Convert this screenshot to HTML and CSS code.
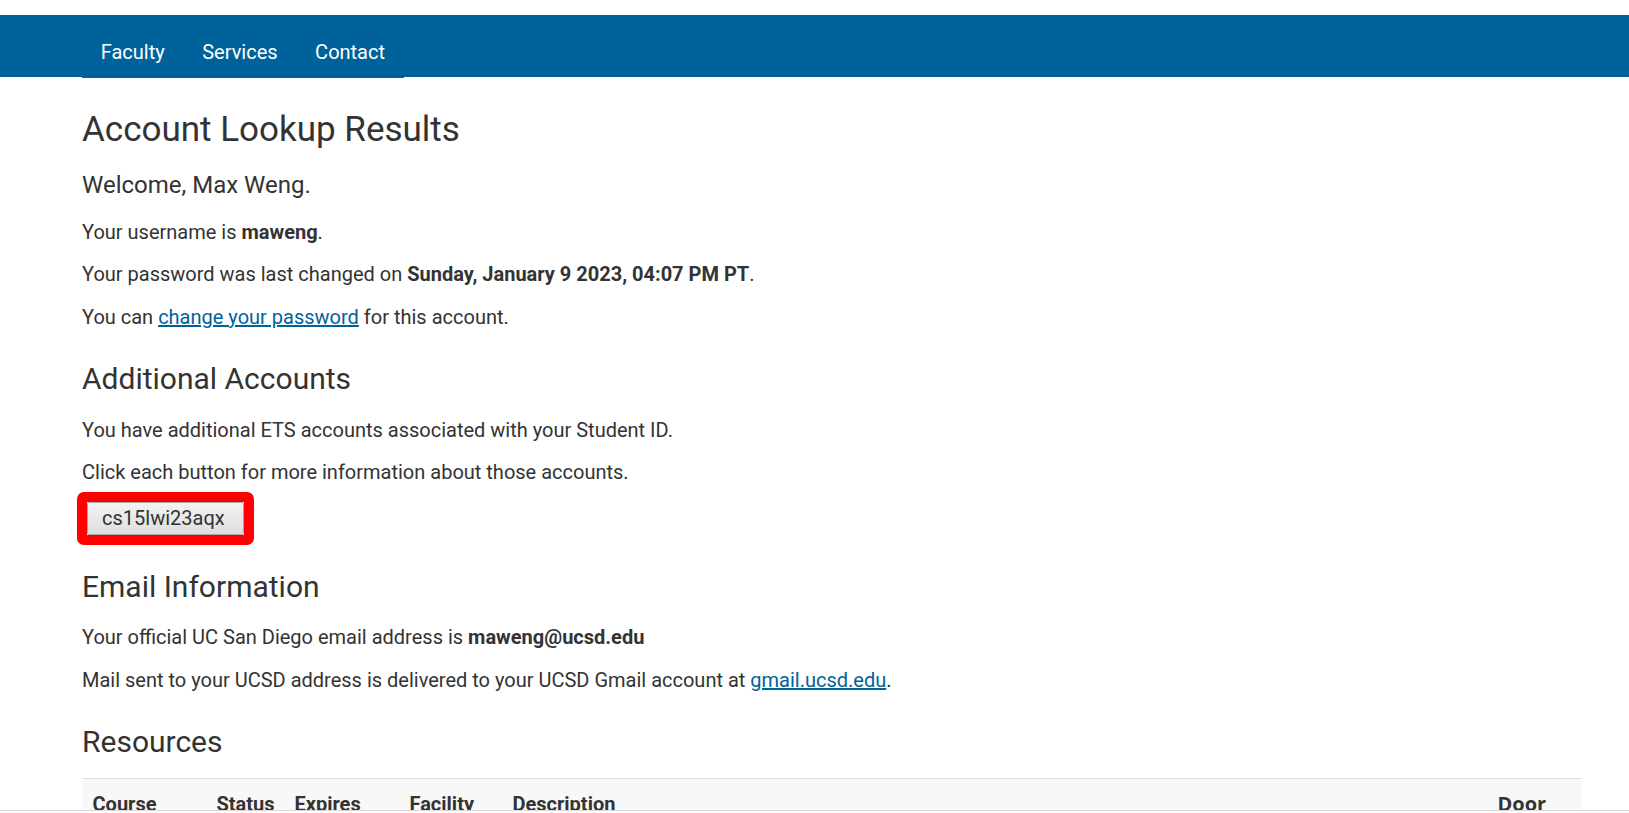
FILE: index.html
```html
<!DOCTYPE html>
<html lang="en">
<head>
<meta charset="utf-8">
<title>Account Lookup Results</title>
<link rel="stylesheet" href="styles.css">
</head>
<body>
<header class="topbar">
  <ul class="nav">
    <li><a href="#">Faculty</a></li>
    <li><a href="#">Services</a></li>
    <li><a href="#">Contact</a></li>
  </ul>
</header>
<main class="container">
  <h1 class="title">Account Lookup Results</h1>
  <h4 class="welcome">Welcome, Max Weng.</h4>
  <p>Your username is <strong>maweng</strong>.</p>
  <p>Your password was last changed on <strong>Sunday, January 9 2023, 04:07 PM PT</strong>.</p>
  <p>You can <a class="link" href="#">change your password</a> for this account.</p>

  <h2 class="section">Additional Accounts</h2>
  <p>You have additional ETS accounts associated with your Student ID.</p>
  <p>Click each button for more information about those accounts.</p>
  <div class="btn-row">
    <span class="btn-wrap">
      <button class="acct-btn" type="button">cs15lwi23aqx</button>
      <span class="highlight"></span>
    </span>
  </div>

  <h2 class="section section-tight">Email Information</h2>
  <p>Your official UC San Diego email address is <strong>maweng@ucsd.edu</strong></p>
  <p>Mail sent to your UCSD address is delivered to your UCSD Gmail account at <a class="link" href="#">gmail.ucsd.edu</a>.</p>

  <h2 class="section">Resources</h2>
  <table class="resources">
    <colgroup>
      <col class="c-course">
      <col class="c-status">
      <col class="c-expires">
      <col class="c-facility">
      <col class="c-desc">
      <col class="c-door">
    </colgroup>
    <thead>
      <tr>
        <th>Course</th>
        <th>Status</th>
        <th>Expires</th>
        <th>Facility</th>
        <th>Description</th>
        <th class="door">Door</th>
      </tr>
    </thead>
  </table>
</main>
<div class="frame-edge"></div>
</body>
</html>
```

FILE: styles.css
```css
html, body {
  margin: 0;
  padding: 0;
  background: #ffffff;
}

body {
  font-family: Roboto, "Liberation Sans", Arial, sans-serif;
  font-size: 20px;
  line-height: 30px;
  color: #333333;
  overflow: hidden;
}

.topbar {
  margin-top: 15px;
  height: 62px;
  background: #00629b;
}

.nav {
  list-style: none;
  margin: 0 0 0 82px;
  padding: 0;
  display: flex;
  width: max-content;
  background: #00629b;
  height: 63px;
}

.nav li {
  display: block;
}

.nav a {
  display: block;
  padding: 22px 18.75px 11px;
  line-height: 30px;
  font-size: 20px;
  color: #ffffff;
  text-decoration: none;
}

.container {
  margin-left: 82px;
  width: 1500px;
}

.title {
  font-size: 35px;
  line-height: 40px;
  font-weight: 400;
  margin: 33px 0 20px;
}

.welcome {
  font-size: 24px;
  line-height: 30px;
  font-weight: 400;
  margin: 0 0 16.7px;
}

p {
  margin: 0 0 12.5px;
}

strong {
  font-weight: 700;
}

.link {
  color: #00629b;
  text-decoration: underline;
}

.section {
  font-size: 30px;
  line-height: 33px;
  font-weight: 400;
  margin: 30px 0 20px;
}

.section-tight {
  margin-bottom: 19px;
}

.btn-row {
  margin: 15.3px 0 35px;
  padding-left: 5px;
}

.btn-wrap {
  position: relative;
  display: inline-block;
  vertical-align: top;
}

.acct-btn {
  display: block;
  width: 157px;
  height: 33px;
  padding: 0 0 0 14px;
  text-align: left;
  font-family: Roboto, "Liberation Sans", Arial, sans-serif;
  font-size: 20px;
  line-height: 31px;
  color: #333333;
  background: linear-gradient(#f3f3f3, #dedede);
  border: 1px solid #a9a9a9;
  border-radius: 2px;
}

.highlight {
  position: absolute;
  left: -10px;
  top: -10px;
  right: -10px;
  bottom: -10px;
  border: 10px solid #ff0000;
  border-radius: 7px;
  pointer-events: none;
}

.resources {
  width: 1500px;
  table-layout: fixed;
  border-collapse: collapse;
  background: #f8f8f8;
  border-top: 1px solid #dddddd;
}

.c-course { width: 124px; }
.c-status { width: 78px; }
.c-expires { width: 115px; }
.c-facility { width: 103px; }
.c-desc { width: 985px; }
.c-door { width: 95px; }

.resources th {
  text-align: left;
  font-weight: 700;
  font-size: 20px;
  line-height: 30px;
  padding: 10px 10px 10px 10.5px;
  white-space: nowrap;
}

.resources th.door {
  font-family: "Open Sans", Roboto, sans-serif;
}

.frame-edge {
  position: fixed;
  left: 0;
  right: 0;
  bottom: 0;
  height: 2px;
  background: #ffffff;
  border-top: 1px solid #dadada;
}
```
